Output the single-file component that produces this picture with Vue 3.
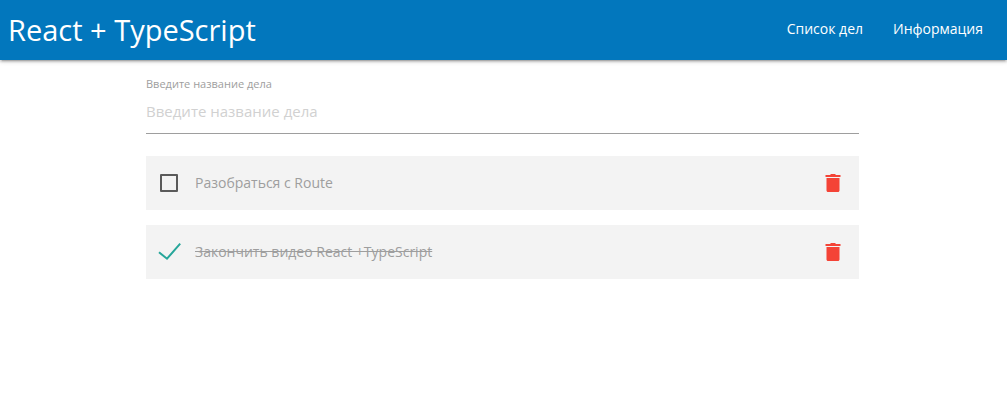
<script setup>
import { ref } from 'vue'

const title = ref('')
const todos = ref([
  { id: 1, title: 'Разобраться с Route', completed: false },
  { id: 2, title: 'Закончить видео React +TypeScript', completed: true }
])

function addTodo() {
  const text = title.value.trim()
  if (!text) return
  todos.value.unshift({ id: Date.now(), title: text, completed: false })
  title.value = ''
}

function removeTodo(id) {
  todos.value = todos.value.filter((todo) => todo.id !== id)
}
</script>

<template>
  <header class="navbar">
    <a href="#" class="brand">React + TypeScript</a>
    <nav class="links">
      <a href="#todos">Список дел</a>
      <a href="#about">Информация</a>
    </nav>
  </header>

  <main class="container">
    <form class="field" @submit.prevent="addTodo">
      <label for="title">Введите название дела</label>
      <input id="title" v-model="title" type="text" placeholder="Введите название дела" />
    </form>

    <ul class="todos">
      <li v-for="todo in todos" :key="todo.id" class="todo" :class="{ completed: todo.completed }">
        <label class="todo-label">
          <span class="check">
            <input v-model="todo.completed" type="checkbox" />
            <svg v-if="todo.completed" class="tick" viewBox="0 0 24 24" aria-hidden="true">
              <path d="M2 12.3 10 18.7 23.2 3.7" />
            </svg>
          </span>
          <span class="todo-text">{{ todo.title }}</span>
        </label>
        <button type="button" class="remove" aria-label="Удалить" @click="removeTodo(todo.id)">
          <svg viewBox="0 0 24 24" aria-hidden="true">
            <path d="M5.5 7h13v12.5c0 .8-.7 1.5-1.5 1.5H7c-.8 0-1.500-.7-1.500-1.500zM5 4h4l1-1h4l1 1h4.500v2H4.500V4z" />
          </svg>
        </button>
      </li>
    </ul>
  </main>
</template>

<style>
body {
  margin: 0;
  background: #fff;
}
</style>

<style scoped>
.navbar,
.container {
  font-family: "Open Sans", "Noto Sans", sans-serif;
}

.navbar {
  display: flex;
  align-items: center;
  justify-content: space-between;
  height: 60px;
  padding: 0 9px 2px 8px;
  box-sizing: border-box;
  background: #0277bd;
  box-shadow: 0 2px 2px 0 rgba(0, 0, 0, 0.14), 0 3px 1px -2px rgba(0, 0, 0, 0.12), 0 1px 5px 0 rgba(0, 0, 0, 0.2);
}

.navbar a {
  color: #fff;
  text-decoration: none;
}

.brand {
  font-size: 29px;
}

.links {
  display: flex;
  font-size: 14px;
}

.links a {
  padding: 0 15px;
  line-height: 56px;
}

.container {
  padding: 0 148px 0 146px;
}

.field {
  display: flex;
  flex-direction: column;
  padding-top: 16px;
}

.field label {
  font-size: 11px;
  line-height: 16px;
  color: #9e9e9e;
}

.field input {
  width: 100%;
  height: 42px;
  padding: 0 0 4px;
  box-sizing: border-box;
  border: 0;
  border-bottom: 1px solid #9e9e9e;
  border-radius: 0;
  outline: none;
  background: transparent;
  font-family: inherit;
  font-size: 15px;
  color: #444;
}

.field input::placeholder {
  color: #d1d1d1;
  opacity: 1;
}

.todos {
  display: flex;
  flex-direction: column;
  gap: 15px;
  margin: 22px 0 0;
  padding: 0;
  list-style: none;
}

.todo {
  display: flex;
  align-items: center;
  justify-content: space-between;
  height: 54px;
  padding: 0 14px 0 11px;
  box-sizing: border-box;
  background: #f3f3f3;
}

.todo-label {
  display: flex;
  align-items: center;
  gap: 14px;
  color: #9e9e9e;
  font-size: 14px;
  line-height: 24px;
  cursor: pointer;
}

.check {
  display: grid;
  place-items: center;
  width: 24px;
  height: 24px;
}

.check input,
.tick {
  grid-area: 1 / 1;
}

.check input {
  appearance: none;
  width: 18px;
  height: 18px;
  margin: 0;
  box-sizing: border-box;
  border: 2px solid #5a5a5a;
  border-radius: 1px;
  cursor: pointer;
}

.check input:checked {
  border-color: transparent;
}

.tick {
  width: 24px;
  height: 24px;
  fill: none;
  stroke: #26a69a;
  stroke-width: 2;
  pointer-events: none;
}

.completed .todo-text {
  text-decoration: line-through;
}

.remove {
  display: flex;
  padding: 0;
  border: 0;
  background: none;
  cursor: pointer;
}

.remove svg {
  width: 24px;
  height: 24px;
  fill: #f44336;
}
</style>
